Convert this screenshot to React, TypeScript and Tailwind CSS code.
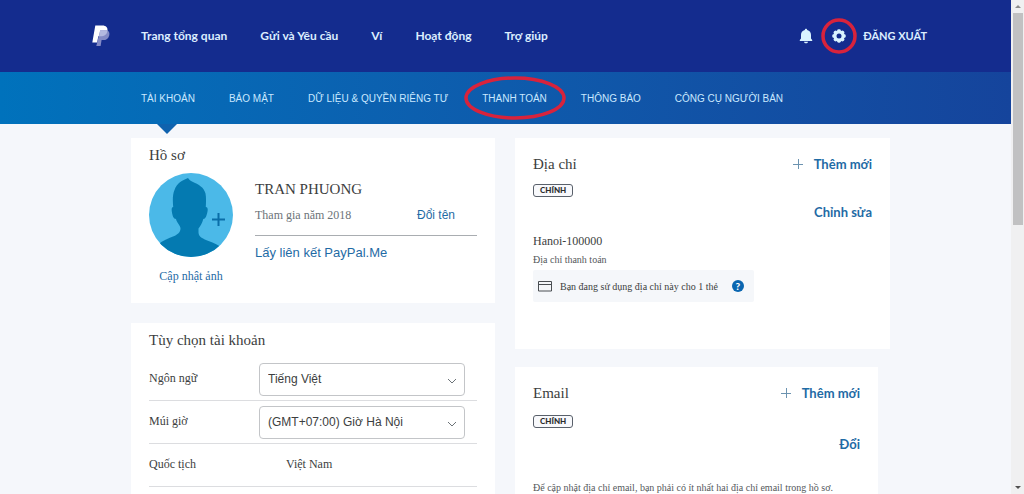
import type { ReactNode } from "react"

const mainLinks = ["Trang tổng quan", "Gửi và Yêu cầu", "Ví", "Hoạt động", "Trợ giúp"]

const tabs = [
  { label: "TÀI KHOẢN", active: true },
  { label: "BẢO MẬT" },
  { label: "DỮ LIỆU & QUYỀN RIÊNG TƯ" },
  { label: "THANH TOÁN", marked: true },
  { label: "THÔNG BÁO" },
  { label: "CÔNG CỤ NGƯỜI BÁN" },
]

function Logo() {
  return (
    <svg viewBox="0 0 18 22" className="h-[22px] w-[18px]" aria-hidden="true">
      <path d="M3.300.5h7.200c3.500 0 5.500 2.100 4.900 5.300-.7 3.700-3.400 5.500-6.900 5.500H6.300L5.200 17.500H.3z" fill="#fff" />
      <path d="M8.200 5.200h6.600c2.200.7 3 2.600 2.500 5-.8 3.500-3.100 4.900-6.200 4.900H9.600L8.600 21H4.300z" fill="#848bc6" />
      <path d="M8.200 5.200h7.200c0 4-2.900 6.100-6.900 6.100H7z" fill="#b4b9e0" />
    </svg>
  )
}

function Bell() {
  return (
    <svg viewBox="0 0 14 16" className="h-4 w-[14px]" fill="#d9f3ff" aria-hidden="true">
      <path d="M7 .8c.7 0 1.100.5 1.200 1.100 2.500.6 3.800 2.600 3.800 5v3.600l1.200 1.500v1H.8v-1L2 10.500V6.900c0-2.400 1.300-4.400 3.800-5C5.900 1.300 6.300.8 7 .8z" />
      <path d="M5 13.800h4c-.2 1-1 1.500-2 1.500s-1.800-.5-2-1.500z" />
    </svg>
  )
}

function Gear() {
  return (
    <svg viewBox="0 0 14 14" className="h-[14px] w-[14px]" aria-hidden="true">
      <g fill="#d9f3ff">
        <circle cx="7" cy="7" r="5.700" />
        <rect x="5.200" y=".3" width="3.600" height="13.400" rx="1.400" />
        <rect x="5.200" y=".3" width="3.600" height="13.400" rx="1.400" transform="rotate(45 7 7)" />
        <rect x="5.200" y=".3" width="3.600" height="13.400" rx="1.400" transform="rotate(90 7 7)" />
        <rect x="5.200" y=".3" width="3.600" height="13.400" rx="1.400" transform="rotate(135 7 7)" />
      </g>
      <circle cx="7" cy="7" r="2.500" fill="#142c8e" />
    </svg>
  )
}

function Avatar() {
  return (
    <svg viewBox="0 0 84 84" className="h-[84px] w-[84px]" aria-hidden="true">
      <clipPath id="face">
        <circle cx="42" cy="42" r="42" />
      </clipPath>
      <g clipPath="url(#face)">
        <rect width="84" height="84" fill="#4bb9e8" />
        <path
          d="M39 5c1 1.500 2 2.500 4 3.500 7 3 12 6 13.500 12 .8 4 .5 9 .3 13.500 2.200 0 2.200 3 1.500 5.500-.7 3-1.800 6.500-4 6.500-1 4-2.800 7-4.800 9.500v4c0 4.500 5 6.500 10 8.500 5.500 2 10 4 15 7.500V90H9V71.500c5-4 10-6 15-8 4-1.500 7.500-4 7.500-8 0-1.500-1-3-2-4.500-1.200-1.700-2-3-2.500-5-2.500 0-3.500-3.500-4-6.500-.6-2.500-.5-5.500 1.200-5.500-.5-6-.8-12 1.300-17C28 10 33 7.500 39 5z"
          fill="#047ab1"
        />
      </g>
      <path d="M63 46.500h13M69.500 40v13" stroke="#0a6ea8" strokeWidth="2" />
    </svg>
  )
}

function Card({ className = "", children }: { className?: string; children: ReactNode }) {
  return <section className={`bg-white px-[18px] ${className}`}>{children}</section>
}

function Badge() {
  return (
    <span className="inline-block rounded-[3px] border border-[#59606a] bg-[#f8f9fc] px-[6px] font-[Lato] text-[8px] leading-[11px] font-black text-[#2c2e2f]">
      CHÍNH
    </span>
  )
}

function AddButton() {
  return (
    <button className="flex items-center gap-[11px] font-[Lato] text-[13px] leading-4 font-bold text-[#1f6ba5]">
      <svg viewBox="0 0 10 10" className="h-[10px] w-[10px]" stroke="#6c93b0" aria-hidden="true">
        <path d="M0 5.500h10M5.500 0v10" />
      </svg>
      Thêm mới
    </button>
  )
}

function SelectRow({ id, label, value }: { id: string; label: string; value: string }) {
  return (
    <div className="flex h-[43px] items-center border-b border-[#dcdde0]">
      <label htmlFor={id} className="w-[110px] pb-[2px] text-xs">
        {label}
      </label>
      <div className="relative w-[206px]">
        <select
          id={id}
          className="h-[33px] w-full appearance-none rounded-[4px] border border-[#c3c5c8] bg-white px-2 font-['Liberation_Sans',sans-serif] text-xs text-[#3c3e40]"
        >
          <option>{value}</option>
        </select>
        <svg
          viewBox="0 0 10 6"
          className="pointer-events-none absolute top-[15px] right-2 h-[6px] w-[10px]"
          fill="none"
          stroke="#6c7378"
          aria-hidden="true"
        >
          <path d="M1 1l4 4 4-4" />
        </svg>
      </div>
    </div>
  )
}

function Header() {
  return (
    <header>
      <div className="flex h-[72px] items-center bg-[#142c8e] pr-[84px] pl-[92px] font-[Lato] text-xs font-bold text-[#dceeff]">
        <a href="#" aria-label="PayPal" className="mr-[31px]">
          <Logo />
        </a>
        <nav className="flex gap-[33px]">
          {mainLinks.map((link) => (
            <a key={link} href="#">
              {link}
            </a>
          ))}
        </nav>
        <div className="ml-auto flex items-center">
          <button aria-label="Thông báo">
            <Bell />
          </button>
          <button aria-label="Cài đặt" className="relative mr-[17px] ml-[19px]">
            <Gear />
            <svg viewBox="0 0 36 36" className="absolute -top-[11px] -left-[11px] h-9 w-9 max-w-none" fill="none" aria-hidden="true">
              <circle cx="18" cy="18" r="16" stroke="#d8233c" strokeWidth="3.500" />
            </svg>
          </button>
          <a href="#" className="text-[11px]">
            ĐĂNG XUẤT
          </a>
        </div>
      </div>
      <nav className="flex h-[52px] items-center gap-[34px] bg-linear-to-r from-[#0072bc] to-[#15449c] pl-[141px] font-['Liberation_Sans',sans-serif] text-[10px] whitespace-nowrap text-[#c9e8ff]">
        {tabs.map((tab) => (
          <a key={tab.label} href="#" className="relative flex h-full items-center">
            {tab.label}
            {tab.active && (
              <svg viewBox="0 0 20 10" className="absolute top-full left-[16px] h-[10px] w-5" aria-hidden="true">
                <path d="M0 0h20L10 10z" fill="#0f62ae" />
              </svg>
            )}
            {tab.marked && (
              <svg
                viewBox="0 0 102 44"
                className="absolute top-[4px] left-1/2 h-[44px] w-[102px] max-w-none -translate-x-1/2"
                fill="none"
                aria-hidden="true"
              >
                <ellipse cx="51" cy="22" rx="49" ry="20" stroke="#d8233c" strokeWidth="3.500" />
              </svg>
            )}
          </a>
        ))}
      </nav>
    </header>
  )
}

function Profile() {
  return (
    <Card className="h-[165px] pt-[7px]">
      <h2 className="text-[15px] leading-5">Hồ sơ</h2>
      <div className="mt-2 flex gap-[22px]">
        <div className="flex w-[84px] flex-col items-center">
          <Avatar />
          <a href="#" className="mt-[11px] text-xs leading-4 whitespace-nowrap text-[#1f6ba5]">
            Cập nhật ảnh
          </a>
        </div>
        <div className="flex-1 pt-[6px]">
          <p className="text-[15px] leading-5">TRAN PHUONG</p>
          <div className="mt-2 flex items-center justify-between border-b border-[#a9adb1] pr-[22px] pb-[12px] text-xs leading-4 text-[#6c7378]">
            <span>Tham gia năm 2018</span>
            <a href="#" className="font-['Liberation_Sans',sans-serif] text-[#1f6ba5]">
              Đổi tên
            </a>
          </div>
          <a href="#" className="mt-[7px] block font-['Liberation_Sans',sans-serif] text-[13px] leading-5 text-[#1f6ba5]">
            Lấy liên kết PayPal.Me
          </a>
        </div>
      </div>
    </Card>
  )
}

function Options() {
  return (
    <Card className="pt-[7px] pb-8">
      <h2 className="mb-2 text-[15px] leading-5">Tùy chọn tài khoản</h2>
      <SelectRow id="language" label="Ngôn ngữ" value="Tiếng Việt" />
      <SelectRow id="timezone" label="Múi giờ" value="(GMT+07:00) Giờ Hà Nội" />
      <div className="flex h-[43px] items-center border-b border-[#dcdde0] pb-[2px] text-xs">
        <span className="w-[137px]">Quốc tịch</span>
        <span>Việt Nam</span>
      </div>
    </Card>
  )
}

function Address() {
  return (
    <Card className="h-[211px] pt-4">
      <div className="flex items-center justify-between">
        <h2 className="text-[15px] leading-5">Địa chỉ</h2>
        <AddButton />
      </div>
      <div className="mt-[10px] flex">
        <Badge />
      </div>
      <div className="mt-[7px] flex justify-end">
        <button className="font-[Lato] text-[13px] leading-4 font-bold text-[#1f6ba5]">Chỉnh sửa</button>
      </div>
      <p className="mt-[13px] text-xs leading-4">Hanoi-100000</p>
      <p className="mt-[3px] text-[10px] leading-4 text-[#55595c]">Địa chỉ thanh toán</p>
      <div className="mt-[2px] inline-flex h-8 items-center rounded-[2px] bg-[#f5f7fa] pr-[10px] pl-[5px] text-[10px] whitespace-nowrap">
        <svg viewBox="0 0 14 12" className="mr-2 h-3 w-[14px]" fill="none" stroke="#4a4e52" aria-hidden="true">
          <path d="M.5 1.500h13v9.500H.5zM.5 4.500h13" />
        </svg>
        Bạn đang sử dụng địa chỉ này cho 1 thẻ
        <button
          aria-label="Trợ giúp"
          className="ml-[14px] h-3 w-3 rounded-full bg-[#0a66b0] font-[Lato] text-[10px] leading-3 font-black text-white"
        >
          ?
        </button>
      </div>
    </Card>
  )
}

function Email() {
  return (
    <Card className="mr-3 pt-4 pb-8">
      <div className="flex items-center justify-between">
        <h2 className="text-[15px] leading-5">Email</h2>
        <AddButton />
      </div>
      <div className="mt-[12px] flex">
        <Badge />
      </div>
      <div className="mt-2 flex justify-end">
        <button className="font-[Lato] text-[13px] leading-4 font-bold text-[#1f6ba5]">Đổi</button>
      </div>
      <p className="mt-7 text-[10px] leading-4 text-[#55595c]">
        Để cập nhật địa chỉ email, bạn phải có ít nhất hai địa chỉ email trong hồ sơ.
      </p>
    </Card>
  )
}

function Scrollbar() {
  return (
    <div className="flex w-[13px] shrink-0 flex-col bg-[#f0f0f1] pl-[2px]">
      <svg viewBox="0 0 10 13" className="h-[13px] w-[10px]" fill="#8b8b8b" aria-hidden="true">
        <path d="M2 8l3-3 3 3z" />
      </svg>
      <div className="h-[43%] w-[10px] bg-[#c1c1c2]" />
      <svg viewBox="0 0 10 13" className="mt-auto h-[13px] w-[10px]" fill="#505050" aria-hidden="true">
        <path d="M2 5l3 3 3-3z" />
      </svg>
    </div>
  )
}

export default function App() {
  return (
    <div className="flex h-screen overflow-hidden bg-[#f5f7fb] font-['Liberation_Serif',serif] text-[#3c3e40]">
      <div className="min-w-0 flex-1">
        <Header />
        <main className="grid grid-cols-[364fr_375fr] items-start gap-5 pt-[14px] pr-[121px] pl-[131px]">
          <div className="flex flex-col gap-5">
            <Profile />
            <Options />
          </div>
          <div className="flex flex-col gap-[18px]">
            <Address />
            <Email />
          </div>
        </main>
      </div>
      <Scrollbar />
    </div>
  )
}
